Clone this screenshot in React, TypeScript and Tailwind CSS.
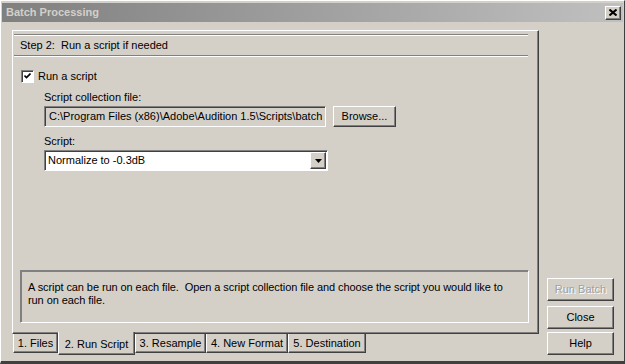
import React from 'react';

// classic Win2k bevels
const raised =
  'border border-t-white border-l-white border-r-[#404040] border-b-[#404040] shadow-[inset_-1px_-1px_0_#808080]';
const sunken =
  'border border-t-[#808080] border-l-[#808080] border-r-white border-b-white shadow-[inset_1px_1px_0_#404040]';

const tabs = [
  { label: '1. Files', w: 'w-[45px]' },
  { label: '2. Run Script', w: 'w-[77px]', active: true },
  { label: '3. Resample', w: 'w-[71px]' },
  { label: '4. New Format', w: 'w-[82px]' },
  { label: '5. Destination', w: 'w-[78px]' },
];

const Button: React.FC<{ label: string; disabled?: boolean }> = ({ label, disabled }) => (
  <button
    className={`${raised} w-[67px] h-[23px] bg-[#d4d0c8] flex items-center justify-center ${
      disabled ? 'text-[#a0a0a0] [text-shadow:1px_1px_0_#ffffff]' : 'text-black'
    }`}
  >
    {label}
  </button>
);

export default function App() {
  return (
    <div className="w-[625px] h-[364px] bg-[#d4d0c8] border border-t-white border-l-white border-r-[#404040] border-b-[3px] border-b-[#404040] flex flex-col font-['Liberation_Sans',Arial,sans-serif] text-[11px] leading-[13px] text-black select-none overflow-hidden">
      {/* Title bar */}
      <div className="mx-[1px] mt-[2px] h-[19px] bg-gradient-to-r from-[#808080] to-[#c0c0c0] flex items-center justify-between pl-[4px] pr-[2px]">
        <span className="font-bold text-[#d4d0c8] text-[11px]">Batch Processing</span>
        <button className={`${raised} w-[16px] h-[14px] bg-[#d4d0c8] flex items-center justify-center`}>
          <svg width="8" height="7" viewBox="0 0 8 7">
            <path d="M0.5 0.5 L7.5 6.5 M7.5 0.5 L0.5 6.5" stroke="#000" strokeWidth="2" />
          </svg>
        </button>
      </div>

      {/* Body */}
      <div className="flex flex-1">
        {/* Left: tab panel */}
        <div className="ml-[11px] pt-[8px] w-[527px] flex flex-col">
          <div className={`${raised} h-[304px] flex flex-col`}>
            {/* header */}
            <div className="ml-[1px] mt-[3px] w-[514px]">
              <div className="border-t border-t-[#808080] border-b border-b-white" />
              <div className="h-[19px] flex items-center pl-[6px] whitespace-pre">Step 2:  Run a script if needed</div>
              <div className="border-t border-t-[#808080] border-b border-b-white" />
            </div>

            {/* run a script */}
            <div className="mt-[13px] ml-[8px] flex items-center gap-[4px]">
              <div className={`${sunken} w-[13px] h-[13px] bg-white flex items-center justify-center`}>
                <svg width="7" height="7" viewBox="0 0 7 7">
                  <path d="M0.5 2.5 L2.5 4.5 L6.5 0.5" stroke="#000" strokeWidth="1.6" fill="none" />
                </svg>
              </div>
              <span>Run a script</span>
            </div>

            <div className="ml-[31px] flex flex-col">
              <div className="mt-[8px]">Script collection file:</div>
              <div className="mt-[2px] flex items-center gap-[7px]">
                <div className={`${sunken} w-[282px] h-[21px] bg-[#d4d0c8] flex items-center pl-[4px] overflow-hidden whitespace-nowrap`}>
                  {'C:\\Program Files (x86)\\Adobe\\Audition 1.5\\Scripts\\batch'}
                </div>
                <button className={`${raised} w-[63px] h-[21px] bg-[#d4d0c8] flex items-center justify-center`}>
                  Browse...
                </button>
              </div>

              <div className="mt-[8px]">Script:</div>
              <div className={`${sunken} mt-[2px] w-[284px] h-[21px] bg-white flex items-center justify-between pl-[3px] pr-[1px]`}>
                <span>Normalize to -0.3dB</span>
                <div className={`${raised} w-[16px] h-[17px] bg-[#d4d0c8] flex items-center justify-center`}>
                  <svg width="7" height="4" viewBox="0 0 7 4">
                    <path d="M0 0 H7 L3.5 4 Z" fill="#000" />
                  </svg>
                </div>
              </div>
            </div>

            {/* description */}
            <div className={`${sunken} mt-auto mb-[10px] ml-[7px] w-[509px] h-[53px] shadow-[inset_1px_1px_0_#808080] border-t-[#808080] px-[7px] pt-[10px] tracking-[-0.08px]`}>
              A script can be run on each file.&nbsp; Open a script collection file and choose the script you would like to
              <br />
              run on each file.
            </div>
          </div>

          {/* tabs */}
          <div className="flex ml-[1px]">
            {tabs.map((t) =>
              t.active ? (
                <div
                  key={t.label}
                  className={`${t.w} -mt-[2px] h-[23px] bg-[#d4d0c8] border-l border-l-white border-r border-r-[#404040] border-b border-b-[#404040] shadow-[inset_-1px_-1px_0_#808080] flex items-center justify-center pt-[3px]`}
                >
                  {t.label}
                </div>
              ) : (
                <div
                  key={t.label}
                  className={`${t.w} h-[19px] bg-[#d4d0c8] border-l border-l-white border-r border-r-[#404040] border-b border-b-[#404040] shadow-[inset_-1px_-1px_0_#808080] flex items-center justify-center`}
                >
                  {t.label}
                </div>
              )
            )}
          </div>
        </div>

        {/* Right: buttons */}
        <div className="ml-[8px] flex flex-col justify-end gap-[5px] pb-[6px]">
          <Button label="Run Batch" disabled />
          <Button label="Close" />
          <div className="-mt-[2px]">
            <Button label="Help" />
          </div>
        </div>
      </div>
    </div>
  );
}
